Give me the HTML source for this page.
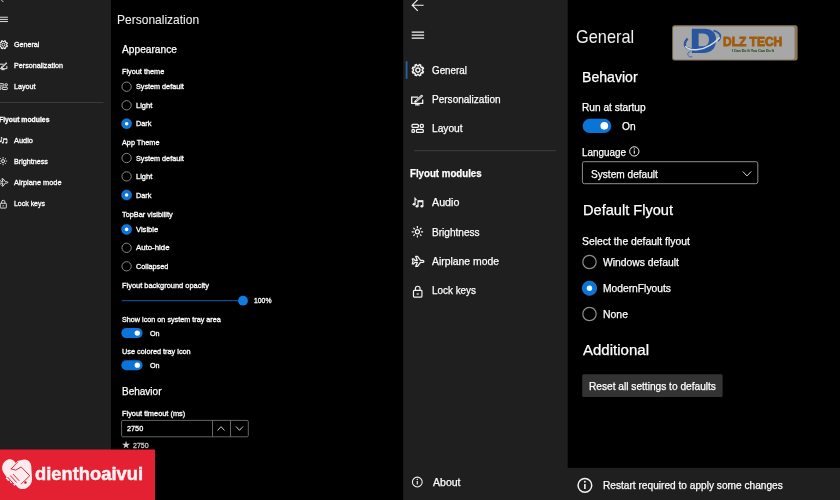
<!DOCTYPE html>
<html lang="en"><head><meta charset="utf-8"><title>ModernFlyouts settings</title>
<style>
html,body{margin:0;padding:0;background:#000;}
body{width:840px;height:500px;overflow:hidden;position:relative;font-family:"Liberation Sans",sans-serif;}
#root{will-change:transform;position:absolute;left:0;top:0;width:840px;height:500px;overflow:hidden;background:#000;}
.t{position:absolute;white-space:nowrap;line-height:1;transform-origin:0 50%;-webkit-text-stroke:0.25px currentColor;}
.r{position:absolute;}
svg{position:absolute;overflow:visible;}
</style></head><body><div id="root">
<svg width="840" height="500" viewBox="0 0 840 500" style="left:0;top:0"><rect x="0" y="0" width="111" height="500" fill="#1f1f1f"/><rect x="403.2" y="0" width="164.5" height="500" fill="#1f1f1f"/><rect x="567" y="467.9" width="273" height="32.1" fill="#1f1f1f"/><rect x="0" y="102" width="103.5" height="1" fill="#3a3a3a"/><circle cx="126.60" cy="86.70" r="4.65" fill="none" stroke="#8c8c8c" stroke-width="0.95"/><circle cx="126.60" cy="105.30" r="4.65" fill="none" stroke="#8c8c8c" stroke-width="0.95"/><circle cx="126.60" cy="123.70" r="5.0" fill="#0b74d9" stroke="#2f8be6" stroke-width="0.5"/><circle cx="126.60" cy="123.70" r="1.8" fill="#eefaff"/><circle cx="126.60" cy="158.00" r="4.65" fill="none" stroke="#8c8c8c" stroke-width="0.95"/><circle cx="126.60" cy="176.40" r="4.65" fill="none" stroke="#8c8c8c" stroke-width="0.95"/><circle cx="126.60" cy="195.00" r="5.0" fill="#0b74d9" stroke="#2f8be6" stroke-width="0.5"/><circle cx="126.60" cy="195.00" r="1.8" fill="#eefaff"/><circle cx="126.60" cy="229.40" r="5.0" fill="#0b74d9" stroke="#2f8be6" stroke-width="0.5"/><circle cx="126.60" cy="229.40" r="1.8" fill="#eefaff"/><circle cx="126.60" cy="247.80" r="4.65" fill="none" stroke="#8c8c8c" stroke-width="0.95"/><circle cx="126.60" cy="266.30" r="4.65" fill="none" stroke="#8c8c8c" stroke-width="0.95"/><rect x="121.7" y="300.25" width="117" height="0.9" fill="#1267b8"/><circle cx="243.00" cy="300.70" r="4.9" fill="#0f7ce0"/><rect x="121.3" y="328.1" width="21.3" height="10" fill="#0b74d9" rx="5"/><circle cx="137.30" cy="333.10" r="2.65" fill="#fff"/><rect x="121.3" y="360.2" width="21.3" height="10" fill="#0b74d9" rx="5"/><circle cx="137.30" cy="365.20" r="2.65" fill="#fff"/><rect x="121.6" y="420.4" width="126.7" height="16.4" fill="none" rx="1.2" stroke="#7c7c7c" stroke-width="0.8"/><rect x="212" y="420.4" width="0.8" height="16.4" fill="#7c7c7c"/><rect x="230" y="420.4" width="0.8" height="16.4" fill="#7c7c7c"/><path d="M217.5 430.5 L221 426.7 L224.5 430.5" fill="none" stroke="#e6e6e6" stroke-width="0.9"/><path d="M236 426.5 L239.5 430.3 L243 426.5" fill="none" stroke="#e6e6e6" stroke-width="0.9"/><rect x="405.7" y="61.2" width="1.8" height="17.6" fill="#27629c"/><rect x="414" y="150.2" width="142" height="1" fill="#3e3e3e"/><rect x="582.6" y="118.8" width="28.7" height="14.2" fill="#0b74d9" rx="7.1"/><circle cx="604.30" cy="125.85" r="3.85" fill="#fff"/><rect x="582.4" y="161.7" width="175.4" height="22" fill="none" rx="2" stroke="#8e8e8e" stroke-width="1"/><path d="M742.8 171.5 L747 175.9 L751.2 171.5" fill="none" stroke="#d8d8d8" stroke-width="1"/><circle cx="589.50" cy="262.00" r="6.7" fill="none" stroke="#8e8e8e" stroke-width="1.2"/><circle cx="589.50" cy="288.20" r="7.2" fill="#0b74d9" stroke="#2f8be6" stroke-width="0.6"/><circle cx="589.50" cy="288.20" r="2.7" fill="#eefaff"/><circle cx="589.50" cy="314.00" r="6.7" fill="none" stroke="#8e8e8e" stroke-width="1.2"/><rect x="582.2" y="374.3" width="140.4" height="22.6" fill="#333333" rx="1.5"/></svg>
<span class="t" style="left:13.50px;top:41px;font-size:7.7px;color:#fff;transform:scaleX(0.927);-webkit-text-stroke-width:0.32px;">General</span>
<span class="t" style="left:13.50px;top:62px;font-size:7.7px;color:#fff;transform:scaleX(0.931);-webkit-text-stroke-width:0.32px;">Personalization</span>
<span class="t" style="left:13.50px;top:83px;font-size:7.7px;color:#fff;transform:scaleX(0.934);-webkit-text-stroke-width:0.32px;">Layout</span>
<span class="t" style="left:-1.20px;top:116px;font-size:7.7px;color:#fff;transform:scaleX(0.888);font-weight:700;-webkit-text-stroke-width:0.32px;">Flyout modules</span>
<span class="t" style="left:13.50px;top:137px;font-size:7.7px;color:#fff;transform:scaleX(0.965);-webkit-text-stroke-width:0.32px;">Audio</span>
<span class="t" style="left:13.50px;top:158px;font-size:7.7px;color:#fff;transform:scaleX(0.935);-webkit-text-stroke-width:0.32px;">Brightness</span>
<span class="t" style="left:13.50px;top:179px;font-size:7.7px;color:#fff;transform:scaleX(0.959);-webkit-text-stroke-width:0.32px;">Airplane mode</span>
<span class="t" style="left:13.50px;top:200px;font-size:7.7px;color:#fff;transform:scaleX(0.905);-webkit-text-stroke-width:0.32px;">Lock keys</span>
<span class="t" style="left:117.00px;top:14px;font-size:12.6px;color:#f0f0f0;transform:scaleX(0.954);-webkit-text-stroke-width:0.05px;">Personalization</span>
<span class="t" style="left:121.50px;top:44px;font-size:10.6px;color:#fff;transform:scaleX(0.962);">Appearance</span>
<span class="t" style="left:121.50px;top:68px;font-size:7.7px;color:#fff;transform:scaleX(0.950);-webkit-text-stroke-width:0.32px;">Flyout theme</span>
<span class="t" style="left:136.20px;top:83px;font-size:7.7px;color:#fff;transform:scaleX(0.940);-webkit-text-stroke-width:0.32px;">System default</span>
<span class="t" style="left:136.20px;top:102px;font-size:7.7px;color:#fff;transform:scaleX(0.976);-webkit-text-stroke-width:0.32px;">Light</span>
<span class="t" style="left:136.20px;top:120px;font-size:7.7px;color:#fff;transform:scaleX(0.953);-webkit-text-stroke-width:0.32px;">Dark</span>
<span class="t" style="left:121.50px;top:139px;font-size:7.7px;color:#fff;transform:scaleX(0.945);-webkit-text-stroke-width:0.32px;">App Theme</span>
<span class="t" style="left:136.20px;top:155px;font-size:7.7px;color:#fff;transform:scaleX(0.940);-webkit-text-stroke-width:0.32px;">System default</span>
<span class="t" style="left:136.20px;top:173px;font-size:7.7px;color:#fff;transform:scaleX(0.976);-webkit-text-stroke-width:0.32px;">Light</span>
<span class="t" style="left:136.20px;top:192px;font-size:7.7px;color:#fff;transform:scaleX(0.953);-webkit-text-stroke-width:0.32px;">Dark</span>
<span class="t" style="left:121.50px;top:211px;font-size:7.7px;color:#fff;transform:scaleX(0.957);-webkit-text-stroke-width:0.32px;">TopBar visibility</span>
<span class="t" style="left:136.20px;top:226px;font-size:7.7px;color:#fff;transform:scaleX(0.989);-webkit-text-stroke-width:0.32px;">Visible</span>
<span class="t" style="left:136.20px;top:244px;font-size:7.7px;color:#fff;transform:scaleX(1.019);-webkit-text-stroke-width:0.32px;">Auto-hide</span>
<span class="t" style="left:136.20px;top:263px;font-size:7.7px;color:#fff;transform:scaleX(0.946);-webkit-text-stroke-width:0.32px;">Collapsed</span>
<span class="t" style="left:121.50px;top:282px;font-size:7.7px;color:#fff;transform:scaleX(0.968);-webkit-text-stroke-width:0.32px;">Flyout background opacity</span>
<span class="t" style="left:253.50px;top:297px;font-size:7.7px;color:#fff;transform:scaleX(0.889);-webkit-text-stroke-width:0.32px;">100%</span>
<span class="t" style="left:121.50px;top:316px;font-size:7.7px;color:#fff;transform:scaleX(0.940);-webkit-text-stroke-width:0.32px;">Show icon on system tray area</span>
<span class="t" style="left:149.80px;top:330px;font-size:7.7px;color:#fff;transform:scaleX(0.935);-webkit-text-stroke-width:0.32px;">On</span>
<span class="t" style="left:121.50px;top:348px;font-size:7.7px;color:#fff;transform:scaleX(0.951);-webkit-text-stroke-width:0.32px;">Use colored tray icon</span>
<span class="t" style="left:149.80px;top:362px;font-size:7.7px;color:#fff;transform:scaleX(0.935);-webkit-text-stroke-width:0.32px;">On</span>
<span class="t" style="left:121.50px;top:386px;font-size:10.6px;color:#fff;transform:scaleX(0.944);">Behavior</span>
<span class="t" style="left:121.50px;top:410px;font-size:7.7px;color:#fff;transform:scaleX(0.961);-webkit-text-stroke-width:0.32px;">Flyout timeout (ms)</span>
<span class="t" style="left:127.30px;top:425px;font-size:7.7px;color:#fff;transform:scaleX(0.946);-webkit-text-stroke-width:0.32px;">2750</span>
<span class="t" style="left:121.60px;top:441px;font-size:9px;color:#d0d0d0;font-family:"DejaVu Sans",sans-serif;">★</span>
<span class="t" style="left:133.00px;top:442px;font-size:7.7px;color:#c4c4c4;transform:scaleX(0.917);-webkit-text-stroke-width:0.32px;">2750</span>
<span class="t" style="left:432.00px;top:65px;font-size:11px;color:#fff;transform:scaleX(0.894);">General</span>
<span class="t" style="left:432.00px;top:94px;font-size:11px;color:#fff;transform:scaleX(0.912);">Personalization</span>
<span class="t" style="left:432.00px;top:123px;font-size:11px;color:#fff;transform:scaleX(0.927);">Layout</span>
<span class="t" style="left:410.40px;top:168px;font-size:11px;color:#fff;transform:scaleX(0.881);font-weight:700;">Flyout modules</span>
<span class="t" style="left:432.00px;top:197px;font-size:11px;color:#fff;transform:scaleX(0.974);">Audio</span>
<span class="t" style="left:432.00px;top:227px;font-size:11px;color:#fff;transform:scaleX(0.916);">Brightness</span>
<span class="t" style="left:432.00px;top:256px;font-size:11px;color:#fff;transform:scaleX(0.945);">Airplane mode</span>
<span class="t" style="left:432.00px;top:285px;font-size:11px;color:#fff;transform:scaleX(0.900);">Lock keys</span>
<span class="t" style="left:432.50px;top:477px;font-size:11px;color:#fff;transform:scaleX(0.957);">About</span>
<span class="t" style="left:575.90px;top:29px;font-size:17.8px;color:#f0f0f0;transform:scaleX(0.919);-webkit-text-stroke-width:0;">General</span>
<span class="t" style="left:582.40px;top:70px;font-size:14.8px;color:#fff;transform:scaleX(0.952);">Behavior</span>
<span class="t" style="left:582.30px;top:102px;font-size:10.9px;color:#fff;transform:scaleX(0.930);">Run at startup</span>
<span class="t" style="left:621.70px;top:121px;font-size:10.9px;color:#fff;transform:scaleX(0.935);">On</span>
<span class="t" style="left:582.30px;top:147px;font-size:10.9px;color:#fff;transform:scaleX(0.907);">Language</span>
<span class="t" style="left:591.00px;top:169px;font-size:10.9px;color:#fff;transform:scaleX(0.929);">System default</span>
<span class="t" style="left:582.50px;top:203px;font-size:14.8px;color:#fff;transform:scaleX(0.986);">Default Flyout</span>
<span class="t" style="left:582.30px;top:236px;font-size:10.9px;color:#fff;transform:scaleX(0.953);">Select the default flyout</span>
<span class="t" style="left:603.20px;top:257px;font-size:10.9px;color:#fff;transform:scaleX(0.950);">Windows default</span>
<span class="t" style="left:603.20px;top:283px;font-size:10.9px;color:#fff;transform:scaleX(0.943);">ModernFlyouts</span>
<span class="t" style="left:603.20px;top:309px;font-size:10.9px;color:#fff;transform:scaleX(0.959);">None</span>
<span class="t" style="left:582.50px;top:343px;font-size:14.8px;color:#fff;transform:scaleX(1.015);">Additional</span>
<span class="t" style="left:588.80px;top:381px;font-size:10.9px;color:#fff;transform:scaleX(0.932);">Reset all settings to defaults</span>
<span class="t" style="left:602.90px;top:480px;font-size:10.9px;color:#fff;transform:scaleX(0.931);">Restart required to apply some changes</span>
<svg width="840" height="500" viewBox="0 0 840 500" style="left:0;top:0"><g transform="translate(418.00 5.20) scale(1.000)"><path d="M5.6 0H-5.4M-0.2 -5.6L-5.8 0L-0.2 5.6" fill="none" stroke="#f4f4f4" stroke-width="1.15"/></g><g transform="translate(418.00 35.00) scale(1.000)"><path d="M-6.3 -3H6.1M-6.3 0H6.1M-6.3 3H6.1" fill="none" stroke="#f4f4f4" stroke-width="1.25"/></g><g transform="translate(417.90 70.10) scale(1.000)"><path d="M4.44 0.74L5.56 1.47L4.97 2.89L3.66 2.62L2.62 3.66L2.89 4.97L1.47 5.56L0.74 4.44L-0.74 4.44L-1.47 5.56L-2.89 4.97L-2.62 3.66L-3.66 2.62L-4.97 2.89L-5.56 1.47L-4.44 0.74L-4.44 -0.74L-5.56 -1.47L-4.97 -2.89L-3.66 -2.62L-2.62 -3.66L-2.89 -4.97L-1.47 -5.56L-0.74 -4.44L0.74 -4.44L1.47 -5.56L2.89 -4.97L2.62 -3.66L3.66 -2.62L4.97 -2.89L5.56 -1.47L4.44 -0.74Z" fill="none" stroke="#f4f4f4" stroke-width="1.45" stroke-linejoin="round"/><circle r="2.1" fill="none" stroke="#f4f4f4" stroke-width="1.35"/></g><g transform="translate(417.40 100.20) scale(1.000)"><path d="M0.6 -3H-5.7V3.2H5.3V-0.6" fill="none" stroke="#f4f4f4" stroke-width="1.3"/><path d="M-2.4 4.6H2.2M-0.1 3.2V4.6" fill="none" stroke="#f4f4f4" stroke-width="1.3"/><path d="M4.4 -4.3L-1.8 1.3" fill="none" stroke="#f4f4f4" stroke-width="2.3" stroke-linecap="round"/><path d="M4.2 -4.1L-1.2 0.8" fill="none" stroke="#1f1f1f" stroke-width="0.55" stroke-linecap="round"/><path d="M-2.2 0.4L-3.5 2.4L-1 1.7Z" fill="#f4f4f4"/></g><g transform="translate(417.60 128.30) scale(1.000)"><rect x="-5.6" y="-4" width="6.4" height="3.1" rx="0.9" fill="none" stroke="#f4f4f4" stroke-width="1.3"/><rect x="2.7" y="-4" width="3" height="3.1" rx="0.9" fill="none" stroke="#f4f4f4" stroke-width="1.3"/><rect x="-5.6" y="1" width="2.4" height="3.1" rx="0.9" fill="none" stroke="#f4f4f4" stroke-width="1.3"/><rect x="-1.2" y="1" width="6.9" height="3.1" rx="0.9" fill="none" stroke="#f4f4f4" stroke-width="1.3"/></g><g transform="translate(418.00 203.10) scale(0.900)"><path d="M-3.3 1.2V-5.3L-1.6 -3.2" fill="none" stroke="#f4f4f4" stroke-width="1.3"/><ellipse cx="-4.4" cy="1.3" rx="1.6" ry="1.35" fill="#f4f4f4"/><path d="M0 3.3V-2.4H5.4V3.3" fill="none" stroke="#f4f4f4" stroke-width="1.3"/><path d="M0 -1.9H5.4" stroke="#f4f4f4" stroke-width="1.8"/><ellipse cx="-1.1" cy="3.5" rx="1.6" ry="1.35" fill="#f4f4f4"/><ellipse cx="4.3" cy="3.5" rx="1.6" ry="1.35" fill="#f4f4f4"/></g><g transform="translate(417.40 231.80) scale(1.000)"><circle r="2.1" fill="none" stroke="#f4f4f4" stroke-width="1.3"/><path d="M0 -3.6V-5.7M0 3.6V5.7M-3.6 0H-5.7M3.6 0H5.7M-2.55 -2.55L-4 -4M2.55 -2.55L4 -4M-2.55 2.55L-4 4M2.55 2.55L4 4" stroke="#f4f4f4" stroke-width="1.2" fill="none"/></g><g transform="translate(417.90 261.40) scale(1.000)"><path d="M-5.6 -2.6H-4.2L-3 -1H-0.6L-2.2 -5H-0.4L2.6 -1H4.6Q6 -1 6 0Q6 1 4.6 1H2.6L-0.4 5H-2.2L-0.6 1H-3L-4.2 2.6H-5.6L-4.9 0Z" fill="none" stroke="#f4f4f4" stroke-width="1.25" stroke-linejoin="round"/></g><g transform="translate(417.70 291.60) scale(0.920)"><rect x="-4.6" y="-1.3" width="9.2" height="7.2" rx="0.8" fill="none" stroke="#f4f4f4" stroke-width="1.3"/><path d="M-2.5 -1.3V-3.4Q-2.5 -5.8 0 -5.8Q2.5 -5.8 2.5 -3.4V-1.3" fill="none" stroke="#f4f4f4" stroke-width="1.3"/><path d="M-1.2 2.6H1.2" stroke="#f4f4f4" stroke-width="1.2"/></g><g transform="translate(417.30 482.00) scale(1.000)"><circle r="4.9" fill="none" stroke="#f4f4f4" stroke-width="1.05"/><path d="M0 -1V2.6" stroke="#f4f4f4" stroke-width="1.15"/><circle cy="-2.6" r="0.7" fill="#f4f4f4"/></g><g transform="translate(584.90 485.30) scale(1.400)"><circle r="4.9" fill="none" stroke="#f4f4f4" stroke-width="1.05"/><path d="M0 -1V2.6" stroke="#f4f4f4" stroke-width="1.15"/><circle cy="-2.6" r="0.7" fill="#f4f4f4"/></g><g transform="translate(634.30 151.40) scale(0.950)"><circle r="4.9" fill="none" stroke="#f4f4f4" stroke-width="1.05"/><path d="M0 -1V2.6" stroke="#f4f4f4" stroke-width="1.15"/><circle cy="-2.6" r="0.7" fill="#f4f4f4"/></g><g transform="translate(3.50 -2.06) scale(0.720)"><path d="M5.6 0H-5.4M-0.2 -5.6L-5.8 0L-0.2 5.6" fill="none" stroke="#f4f4f4" stroke-width="1.15"/></g><g transform="translate(3.50 19.40) scale(0.720)"><path d="M-6.3 -3H6.1M-6.3 0H6.1M-6.3 3H6.1" fill="none" stroke="#f4f4f4" stroke-width="1.25"/></g><g transform="translate(3.43 44.67) scale(0.720)"><path d="M4.44 0.74L5.56 1.47L4.97 2.89L3.66 2.62L2.62 3.66L2.89 4.97L1.47 5.56L0.74 4.44L-0.74 4.44L-1.47 5.56L-2.89 4.97L-2.62 3.66L-3.66 2.62L-4.97 2.89L-5.56 1.47L-4.44 0.74L-4.44 -0.74L-5.56 -1.47L-4.97 -2.89L-3.66 -2.62L-2.62 -3.66L-2.89 -4.97L-1.47 -5.56L-0.74 -4.44L0.74 -4.44L1.47 -5.56L2.89 -4.97L2.62 -3.66L3.66 -2.62L4.97 -2.89L5.56 -1.47L4.44 -0.74Z" fill="none" stroke="#f4f4f4" stroke-width="1.45" stroke-linejoin="round"/><circle r="2.1" fill="none" stroke="#f4f4f4" stroke-width="1.35"/></g><g transform="translate(3.07 66.34) scale(0.720)"><path d="M0.6 -3H-5.7V3.2H5.3V-0.6" fill="none" stroke="#f4f4f4" stroke-width="1.3"/><path d="M-2.4 4.6H2.2M-0.1 3.2V4.6" fill="none" stroke="#f4f4f4" stroke-width="1.3"/><path d="M4.4 -4.3L-1.8 1.3" fill="none" stroke="#f4f4f4" stroke-width="2.3" stroke-linecap="round"/><path d="M4.2 -4.1L-1.2 0.8" fill="none" stroke="#1f1f1f" stroke-width="0.55" stroke-linecap="round"/><path d="M-2.2 0.4L-3.5 2.4L-1 1.7Z" fill="#f4f4f4"/></g><g transform="translate(3.21 86.58) scale(0.720)"><rect x="-5.6" y="-4" width="6.4" height="3.1" rx="0.9" fill="none" stroke="#f4f4f4" stroke-width="1.3"/><rect x="2.7" y="-4" width="3" height="3.1" rx="0.9" fill="none" stroke="#f4f4f4" stroke-width="1.3"/><rect x="-5.6" y="1" width="2.4" height="3.1" rx="0.9" fill="none" stroke="#f4f4f4" stroke-width="1.3"/><rect x="-1.2" y="1" width="6.9" height="3.1" rx="0.9" fill="none" stroke="#f4f4f4" stroke-width="1.3"/></g><g transform="translate(3.50 140.43) scale(0.648)"><path d="M-3.3 1.2V-5.3L-1.6 -3.2" fill="none" stroke="#f4f4f4" stroke-width="1.3"/><ellipse cx="-4.4" cy="1.3" rx="1.6" ry="1.35" fill="#f4f4f4"/><path d="M0 3.3V-2.4H5.4V3.3" fill="none" stroke="#f4f4f4" stroke-width="1.3"/><path d="M0 -1.9H5.4" stroke="#f4f4f4" stroke-width="1.8"/><ellipse cx="-1.1" cy="3.5" rx="1.6" ry="1.35" fill="#f4f4f4"/><ellipse cx="4.3" cy="3.5" rx="1.6" ry="1.35" fill="#f4f4f4"/></g><g transform="translate(3.07 161.10) scale(0.720)"><circle r="2.1" fill="none" stroke="#f4f4f4" stroke-width="1.3"/><path d="M0 -3.6V-5.7M0 3.6V5.7M-3.6 0H-5.7M3.6 0H5.7M-2.55 -2.55L-4 -4M2.55 -2.55L4 -4M-2.55 2.55L-4 4M2.55 2.55L4 4" stroke="#f4f4f4" stroke-width="1.2" fill="none"/></g><g transform="translate(3.43 182.41) scale(0.720)"><path d="M-5.6 -2.6H-4.2L-3 -1H-0.6L-2.2 -5H-0.4L2.6 -1H4.6Q6 -1 6 0Q6 1 4.6 1H2.6L-0.4 5H-2.2L-0.6 1H-3L-4.2 2.6H-5.6L-4.9 0Z" fill="none" stroke="#f4f4f4" stroke-width="1.25" stroke-linejoin="round"/></g><g transform="translate(3.28 204.15) scale(0.662)"><rect x="-4.6" y="-1.3" width="9.2" height="7.2" rx="0.8" fill="none" stroke="#f4f4f4" stroke-width="1.3"/><path d="M-2.5 -1.3V-3.4Q-2.5 -5.8 0 -5.8Q2.5 -5.8 2.5 -3.4V-1.3" fill="none" stroke="#f4f4f4" stroke-width="1.3"/><path d="M-1.2 2.6H1.2" stroke="#f4f4f4" stroke-width="1.2"/></g><rect x="0" y="449.5" width="155" height="51" fill="#e42033"/><g transform="translate(0 446) scale(0.1079)"><path d="M145 158 C128 118 80 112 50 138 C14 168 12 218 36 252 L62 290 L52 300 L75 325 L88 318 L100 345 L115 340 L130 368 L146 362 L168 386 C190 404 232 402 252 386 C290 360 300 330 296 290 L291 212 C296 160 262 118 214 127 C180 130 155 140 145 158 Z" fill="#fcecee"/><path d="M103 212 L162 150 M103 212 L146 224 L196 194 L276 276 L196 352 M72 290 L128 352 M97 276 L152 336 M122 262 L176 320" fill="none" stroke="#e42033" stroke-width="9" stroke-linecap="round" stroke-linejoin="round"/><circle cx="236" cy="338" r="11" fill="#b0182a"/></g><rect x="672.2" y="25.2" width="125.4" height="35.2" rx="2.5" fill="#8a7658"/><rect x="673.1" y="26.6" width="121.5" height="33" rx="2" fill="#a7a7a7"/><path d="M713.5 30.6 Q719.8 32.2 720.4 36 Q720.6 38.6 718 41.2" fill="none" stroke="#2b56a0" stroke-width="1.7"/><path d="M691.8 28.8 H704.5 Q716 29.2 716 39.5 Q716 52.8 703 53 H691.8 Z M698.6 33.6 V46.3 H703 Q709 46 709 39.8 Q709 33.8 703 33.6 Z" fill="#2a56a0" fill-rule="evenodd"/><path d="M687.6 38.6 Q682.6 44.4 686.4 47.6 Q690 50.2 699 48.8" fill="none" stroke="#2b56a0" stroke-width="2.3"/><path d="M685.4 46.2 Q688 50.6 698 49.5 Q709.5 48 719.8 37.4" fill="none" stroke="#d6deee" stroke-width="1.5"/><path d="M690.5 51.2 Q686.8 52.6 687.8 55.2 Q688.8 57.6 692.4 56.8" fill="none" stroke="#3d68ad" stroke-width="0.9"/></svg>
<span class="t" style="left:35.00px;top:465px;font-size:18.2px;color:#fdf1f2;transform:scaleX(1.009);font-weight:700;-webkit-text-stroke:0.5px #fdf1f2;">dienthoaivui</span>
<span class="t" style="left:722.80px;top:35px;font-size:13px;color:#a05c0e;transform:scaleX(0.921);font-weight:700;-webkit-text-stroke:0.9px #a05c0e;">DLZ TECH</span>
<span class="t" style="left:732.40px;top:50px;font-size:3.1px;color:#2d5a2d;transform:scaleX(1.159);font-weight:700;-webkit-text-stroke:0.15px #2d5a2d;">I Can Do It You Can Do It</span>
</div></body></html>
